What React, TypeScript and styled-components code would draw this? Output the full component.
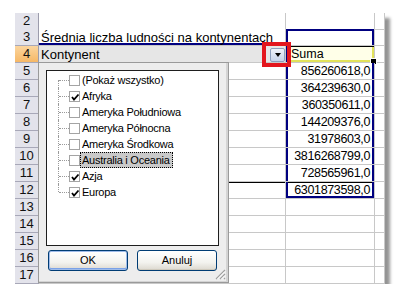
import styled, { createGlobalStyle } from "styled-components";

const GlobalStyle = createGlobalStyle`
  body {
    margin: 0;
    background: #ffffff;
    font-family: "Liberation Sans", Arial, sans-serif;
  }
`;

const NAVY = "#000080";
const GRID = "#c8c8c8";

const Page = styled.div`
  padding: 13px 0 0 15px;
`;

const Sheet = styled.div`
  position: relative;
  width: 370px;
  background: #ffffff;
  box-shadow: 5px 5px 3px rgba(0, 0, 0, 0.42);
`;

const Row = styled.div<{ $h: number }>`
  display: grid;
  grid-template-columns: 24px 247px 89px 10px;
  height: ${(p) => p.$h}px;
`;

const RowHead = styled.div<{ $active?: boolean }>`
  box-sizing: border-box;
  background: ${(p) =>
    p.$active ? "linear-gradient(#fbd59e, #f6b867)" : "#e3e3eb"};
  border-right: 1px solid #9c9cac;
  border-bottom: 1px solid #a8a8b8;
  font-size: 13px;
  line-height: 16px;
  text-align: center;
  color: #111;
`;

type ACellProps = { $field?: boolean; $navyBottom?: boolean; $rule?: boolean };

const ACell = styled.div<ACellProps>`
  box-sizing: border-box;
  display: flex;
  align-items: center;
  justify-content: space-between;
  padding-left: 2px;
  border-right: 1px solid ${GRID};
  border-bottom: 1px solid ${GRID};
  background: ${(p) => (p.$field ? "#e6e6e6" : "#ffffff")};
  box-shadow: ${(p) =>
    p.$navyBottom
      ? `inset 0 -2px ${NAVY}`
      : p.$rule
      ? "inset 0 1px #000"
      : "none"};
  font-size: 13px;
  white-space: nowrap;
  color: #000;
`;

type BCellProps = {
  $box?: boolean;
  $boxTop?: boolean;
  $boxBottom?: boolean;
  $rule?: boolean;
  $selected?: boolean;
};

const bShadow = (p: BCellProps) => {
  if (p.$selected)
    return `inset 2px 0 ${NAVY}, inset 0 1px #000, inset -2px 0 #e2e25a, inset 0 -2px #e2e25a`;
  const s: string[] = [];
  if (p.$box) s.push(`inset 2px 0 ${NAVY}`, `inset -2px 0 ${NAVY}`);
  if (p.$boxTop) s.push(`inset 0 2px ${NAVY}`);
  if (p.$boxBottom) s.push(`inset 0 -2px ${NAVY}`);
  if (p.$rule) s.push("inset 0 1px #000");
  return s.length ? s.join(", ") : "none";
};

const BCell = styled.div<BCellProps>`
  position: relative;
  box-sizing: border-box;
  border-right: 1px solid ${GRID};
  border-bottom: 1px solid ${GRID};
  background: ${(p) => (p.$selected ? "#ffffe8" : "#ffffff")};
  box-shadow: ${bShadow};
  font-size: 12.5px;
  letter-spacing: ${(p) => (p.$selected ? "0" : "-0.35px")};
  line-height: 16px;
  text-align: ${(p) => (p.$selected ? "left" : "right")};
  padding: ${(p) => (p.$selected ? "0 0 0 5px" : "0 4px 0 0")};
  white-space: nowrap;
  color: #000;

  ${(p) =>
    p.$selected &&
    `&::after {
      content: "";
      position: absolute;
      right: -3px;
      bottom: -3px;
      width: 5px;
      height: 5px;
      background: #000;
      border: 1px solid #fff;
    }`}
`;

const CCell = styled.div`
  box-sizing: border-box;
  border-right: 1px solid ${GRID};
  border-bottom: 1px solid ${GRID};
`;

const DropButton = styled.div`
  position: relative;
  box-sizing: border-box;
  width: 15px;
  height: 14px;
  margin-top: 1px;
  border: 1px solid #8d9fbd;
  border-radius: 2px;
  background: linear-gradient(#eef2f9, #c6d3ea);
  display: flex;
  align-items: center;
  justify-content: center;

  &::before {
    content: "";
    border-left: 3.5px solid transparent;
    border-right: 3.5px solid transparent;
    border-top: 4px solid #000;
  }
`;

const Callout = styled.div`
  position: absolute;
  top: -7px;
  left: -9px;
  right: -7px;
  bottom: -6px;
  border: 4px solid #e3161d;
  z-index: 2;
`;

const Panel = styled.div`
  position: absolute;
  left: 23px;
  top: 49px;
  width: 191px;
  height: 221px;
  box-sizing: border-box;
  z-index: 3;
  background: #ededed;
  border: 1px solid #9a9a9a;
  box-shadow: inset -2px -1px #d4d4d4;
  padding: 7px 9px 0 7px;
  font-family: "Liberation Sans", Arial, sans-serif;
`;

const ListBox = styled.div`
  box-sizing: border-box;
  height: 176px;
  background: #ffffff;
  border: 1px solid #1e1e1e;
  padding-top: 1px;
`;

const Item = styled.div`
  display: flex;
  align-items: center;
  height: 16px;
  padding-left: 11px;
`;

const Branch = styled.span<{ $first?: boolean; $last?: boolean }>`
  position: relative;
  width: 11px;
  height: 16px;
  flex: none;

  &::before {
    content: "";
    position: absolute;
    left: 0;
    top: ${(p) => (p.$first ? "8px" : "0")};
    bottom: ${(p) => (p.$last ? "8px" : "0")};
    border-left: 1px dotted #9a9a9a;
  }

  &::after {
    content: "";
    position: absolute;
    left: 1px;
    right: 0;
    top: 8px;
    border-top: 1px dotted #9a9a9a;
  }
`;

const Box = styled.span`
  position: relative;
  box-sizing: border-box;
  width: 11px;
  height: 11px;
  flex: none;
  border: 1px solid #a4a4a4;
  background: #ffffff;

  svg {
    position: absolute;
    left: 0;
    top: 0;
  }
`;

const Label = styled.span<{ $focus?: boolean }>`
  box-sizing: border-box;
  height: 16px;
  line-height: 14px;
  padding: 0 2px 0 1px;
  border: 1px ${(p) => (p.$focus ? "dotted #000" : "solid transparent")};
  background: ${(p) => (p.$focus ? "#c9c9c9" : "transparent")};
  font-size: 11px;
  letter-spacing: -0.25px;
  color: #000;
  white-space: nowrap;
`;

const Buttons = styled.div`
  display: flex;
  gap: 9px;
  margin-top: 4px;
  padding-left: 2px;
`;

const Button = styled.div<{ $default?: boolean }>`
  box-sizing: border-box;
  width: 80px;
  height: 21px;
  border: 1px solid #003c74;
  border-radius: 3px;
  background: linear-gradient(#ffffff, #f3f3ef 60%, #dcd8cf);
  box-shadow: ${(p) =>
    p.$default
      ? "inset 0 0 0 1px #9fbcea, inset 0 -1px 0 1px #7ba2e7"
      : "inset 0 -1px 0 #cfcabd"};
  font-size: 11px;
  line-height: 19px;
  text-align: center;
  color: #000;
`;

const Grip = styled.svg`
  position: absolute;
  right: 2px;
  bottom: 2px;
`;

type SheetRow = {
  n: number;
  a?: string;
  b?: string;
};

const rows: SheetRow[] = [
  { n: 2 },
  { n: 3, a: "Średnia liczba ludności na kontynentach" },
  { n: 4, a: "Kontynent", b: "Suma" },
  { n: 5, b: "856260618,0" },
  { n: 6, b: "364239630,0" },
  { n: 7, b: "360350611,0" },
  { n: 8, b: "144209376,0" },
  { n: 9, b: "31978603,0" },
  { n: 10, b: "3816268799,0" },
  { n: 11, b: "728565961,0" },
  { n: 12, b: "6301873598,0" },
  { n: 13 },
  { n: 14 },
  { n: 15 },
  { n: 16 },
  { n: 17 },
];

const continents = [
  { name: "(Pokaż wszystko)", checked: false },
  { name: "Afryka", checked: true },
  { name: "Ameryka Południowa", checked: false },
  { name: "Ameryka Północna", checked: false },
  { name: "Ameryka Środkowa", checked: false },
  { name: "Australia i Oceania", checked: false, focus: true },
  { name: "Azja", checked: true },
  { name: "Europa", checked: true },
];

function Check() {
  return (
    <svg width="11" height="11" viewBox="0 0 11 11">
      <path
        d="M2 5 L4 7.5 L8.5 2.5"
        fill="none"
        stroke="#000"
        strokeWidth="1.8"
      />
    </svg>
  );
}

function FilterPanel() {
  return (
    <Panel>
      <ListBox>
        {continents.map((c, i) => (
          <Item key={c.name}>
            <Branch $first={i === 0} $last={i === continents.length - 1} />
            <Box>{c.checked && <Check />}</Box>
            <Label $focus={c.focus}>{c.name}</Label>
          </Item>
        ))}
      </ListBox>
      <Buttons>
        <Button $default>OK</Button>
        <Button>Anuluj</Button>
      </Buttons>
      <Grip width="11" height="11" viewBox="0 0 11 11">
        <path d="M10 1 L1 10 M10 5 L5 10 M10 9 L9 10" stroke="#a0a0a0" strokeWidth="1.2" />
        <path d="M10 2.5 L2.5 10 M10 6.5 L6.5 10" stroke="#ffffff" strokeWidth="1" />
      </Grip>
    </Panel>
  );
}

export default function App() {
  return (
    <>
      <GlobalStyle />
      <Page>
        <Sheet>
          {rows.map((r) => {
            const inBox = r.n >= 3 && r.n <= 12;
            return (
              <Row key={r.n} $h={r.n === 2 ? 16 : 17}>
                <RowHead $active={r.n === 4}>{r.n}</RowHead>
                <ACell
                  $field={r.n === 4}
                  $navyBottom={r.n === 3}
                  $rule={r.n === 12}
                >
                  {r.a}
                  {r.n === 4 && (
                    <DropButton>
                      <Callout />
                    </DropButton>
                  )}
                </ACell>
                <BCell
                  $box={inBox}
                  $boxTop={r.n === 3}
                  $boxBottom={r.n === 12}
                  $rule={r.n === 12}
                  $selected={r.n === 4}
                >
                  {r.b}
                </BCell>
                <CCell />
              </Row>
            );
          })}
          <FilterPanel />
        </Sheet>
      </Page>
    </>
  );
}
